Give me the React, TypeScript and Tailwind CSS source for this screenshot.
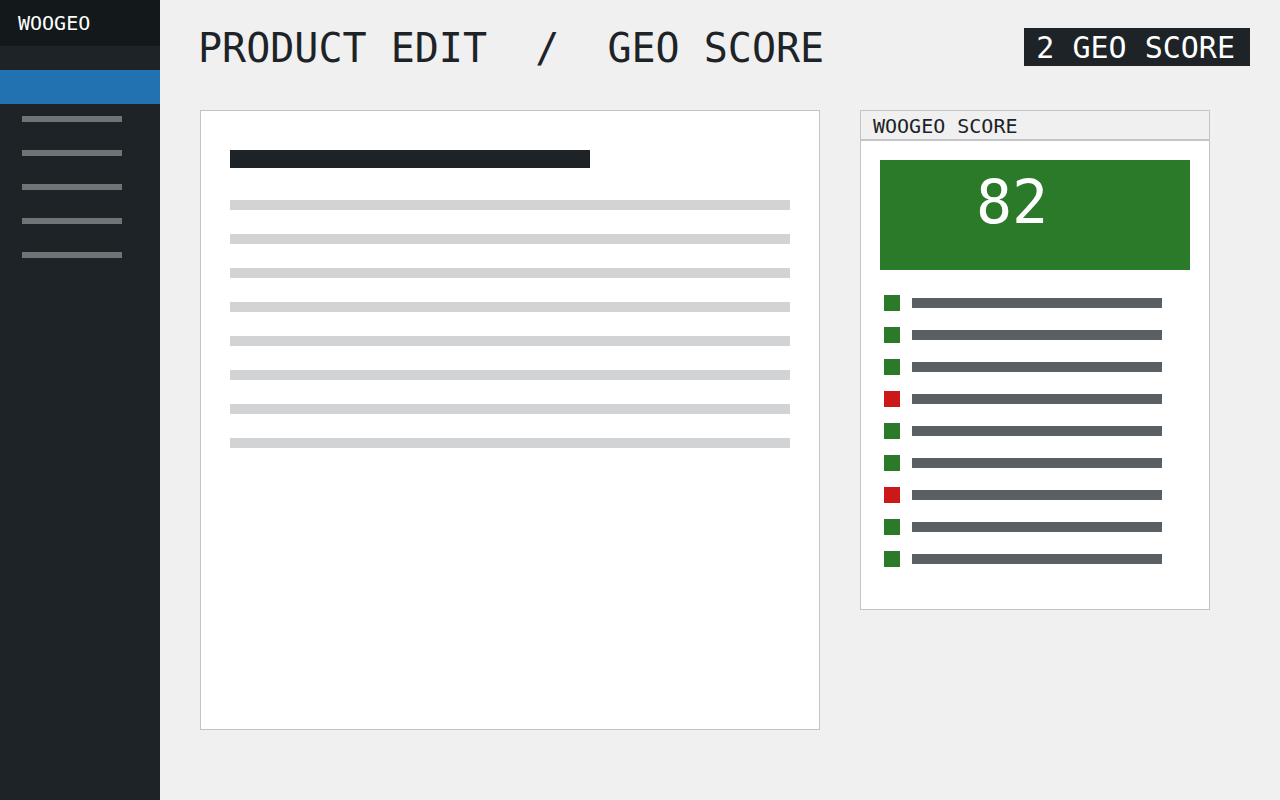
import React from 'react';
import clsx from 'clsx';

const navItems = ['dashboard', 'products', 'orders', 'reports', 'settings'];

const contentLines = [1, 2, 3, 4, 5, 6, 7, 8];

const checks = [true, true, true, false, true, true, false, true, true];

const Sidebar: React.FC = () => (
  <aside className="w-40 shrink-0 bg-[#1d2327]">
    <div className="bg-[#13181a] pl-[18px] text-[20px] leading-[46px] text-white">WOOGEO</div>
    <nav className="mt-6">
      <a href="#score" aria-current="page" className="block h-[34px] bg-[#2271b1]" />
      {navItems.map((item) => (
        <a key={item} href={`#${item}`} className="block h-[34px] px-[22px] pt-3">
          <span className="block h-1.5 w-[100px] bg-[#6f7477]" />
        </a>
      ))}
    </nav>
  </aside>
);

const Editor: React.FC = () => (
  <section className="min-h-[620px] border border-[#c3c4c7] bg-white px-[29px] pt-[39px]">
    <div className="h-[18px] w-[360px] max-w-full bg-[#1d2327]" />
    <div className="mt-8 space-y-6">
      {contentLines.map((line) => (
        <div key={line} className="h-2.5 bg-[#d2d3d4]" />
      ))}
    </div>
  </section>
);

const ScorePanel: React.FC = () => (
  <section className="border border-[#c3c4c7] bg-white">
    <h2 className="border-b-2 border-[#c3c4c7] bg-[#f0f0f1] pt-0.5 pl-3 text-[20px] leading-[26px]">
      WOOGEO SCORE
    </h2>
    <div className="px-[19px] pt-[19px] pb-[42px]">
      <div className="h-[110px] bg-[#2a7a2a] pt-3 pl-24 text-[60px] leading-[60px] text-white">82</div>
      <ul className="mt-[25px] space-y-4 pr-7 pl-1">
        {checks.map((passed, i) => (
          <li key={i} className="flex items-center gap-3">
            <span className={clsx('h-4 w-4', passed ? 'bg-[#2a7a2a]' : 'bg-[#cc1818]')} />
            <span className="h-2.5 flex-1 bg-[#5a5f63]" />
          </li>
        ))}
      </ul>
    </div>
  </section>
);

const App: React.FC = () => {
  return (
    <div className="flex min-h-screen bg-[#f0f0f0] font-['DejaVu_Sans_Mono',monospace] text-[#1d2327]">
      <Sidebar />
      <main className="min-w-0 flex-1 pt-7 pb-[70px] pl-[38px]">
        <header className="flex items-start justify-between pr-[30px]">
          <h1 className="text-[40px] leading-10 whitespace-pre">{'PRODUCT EDIT  /  GEO SCORE'}</h1>
          <span className="bg-[#1d2327] pt-0.5 pr-[15px] pl-3 text-[30px] leading-9 whitespace-nowrap text-white">
            2 GEO SCORE
          </span>
        </header>
        <div className="mt-[42px] grid grid-cols-[62fr_35fr] items-start gap-10 pr-[70px] pl-0.5">
          <Editor />
          <ScorePanel />
        </div>
      </main>
    </div>
  );
};

export default App;
